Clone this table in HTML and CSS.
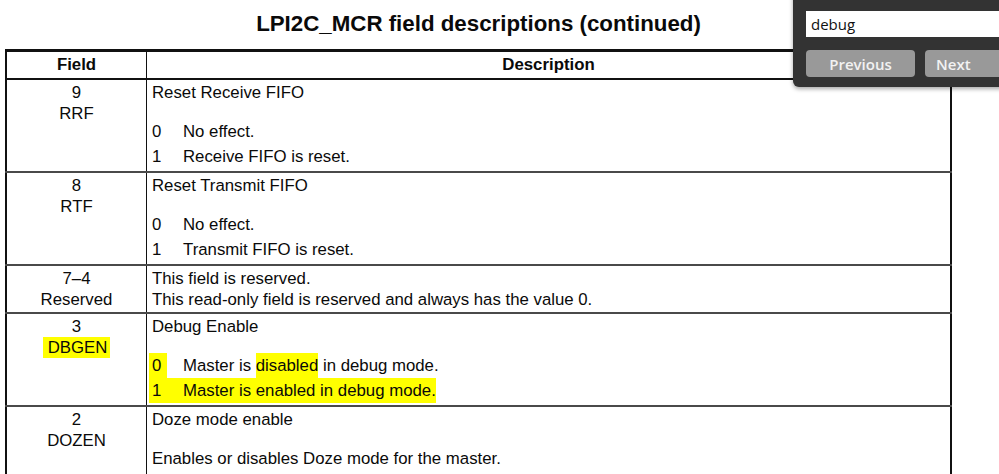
FILE: index.html
```html
<!DOCTYPE html>
<html>
<head>
<meta charset="utf-8">
<link rel="stylesheet" href="styles.css">
</head>
<body>
<div class="page">
  <h1 class="title">LPI2C_MCR field descriptions (continued)</h1>
  <table class="fields">
    <thead>
      <tr><th class="c-field">Field</th><th class="c-desc">Description</th></tr>
    </thead>
    <tbody>
      <tr>
        <td class="c-field"><div>9</div><div>RRF</div></td>
        <td class="c-desc">
          <div class="line">Reset Receive FIFO</div>
          <div class="values">
            <div class="val"><span class="num">0</span><span>No effect.</span></div>
            <div class="val"><span class="num">1</span><span>Receive FIFO is reset.</span></div>
          </div>
        </td>
      </tr>
      <tr>
        <td class="c-field"><div>8</div><div>RTF</div></td>
        <td class="c-desc">
          <div class="line">Reset Transmit FIFO</div>
          <div class="values">
            <div class="val"><span class="num">0</span><span>No effect.</span></div>
            <div class="val"><span class="num">1</span><span>Transmit FIFO is reset.</span></div>
          </div>
        </td>
      </tr>
      <tr>
        <td class="c-field"><div>7–4</div><div>Reserved</div></td>
        <td class="c-desc">
          <div class="line">This field is reserved.</div>
          <div class="line">This read-only field is reserved and always has the value 0.</div>
        </td>
      </tr>
      <tr>
        <td class="c-field"><div>3</div><div><span class="hl hl-name">DBGEN</span></div></td>
        <td class="c-desc">
          <div class="line">Debug Enable</div>
          <div class="values">
            <div class="val"><span class="num"><span class="hl hl-num">0</span></span><span>Master is <span class="hl hl-word">disabled</span> in debug mode.</span></div>
            <div class="val"><span class="hl hl-line"><span class="num">1</span><span>Master is enabled in debug mode.</span></span></div>
          </div>
        </td>
      </tr>
      <tr class="last-row">
        <td class="c-field"><div>2</div><div>DOZEN</div></td>
        <td class="c-desc">
          <div class="line">Doze mode enable</div>
          <div class="values">
            <div class="val">Enables or disables Doze mode for the master.</div>
          </div>
        </td>
      </tr>
    </tbody>
  </table>
</div>

<div class="findbar">
  <div class="find-label">Find</div>
  <div class="find-input">debug</div>
  <div class="find-buttons">
    <button class="find-btn btn-prev">Previous</button>
    <button class="find-btn btn-next">Next</button>
  </div>
</div>
</body>
</html>
```

FILE: styles.css
```css
html, body {
  margin: 0;
  padding: 0;
  background: #ffffff;
  overflow: hidden;
}

body {
  width: 999px;
  height: 474px;
  position: relative;
  font-family: "Liberation Sans", Arial, sans-serif;
  color: #0a0a0a;
}

.page {
  padding-left: 5px;
  width: 947px;
}

.title {
  margin: 0;
  padding-top: 12px;
  height: 49px;
  box-sizing: border-box;
  text-align: center;
  font-size: 22.3px;
  line-height: 24px;
  font-weight: bold;
  color: #0a0a0a;
}

.fields {
  width: 947px;
  border-collapse: collapse;
  border: 2px solid #111;
  border-top-width: 3px;
  font-size: 16.8px;
}

.fields th {
  font-weight: bold;
  font-size: 16.8px;
  line-height: 22px;
  padding: 2px 0 2px;
  text-align: center;
  border-bottom: 2px solid #111;
}

.fields th.c-field {
  border-right: 1px solid #111;
}

.c-field {
  width: 139px;
}

.fields td {
  vertical-align: top;
  border-top: 2px solid #4a4a4a;
  padding: 2px 5px 2px 5px;
  line-height: 21px;
}

.fields .last-row td {
  padding-bottom: 12px;
}

.fields td.c-field {
  text-align: center;
  border-right: 1px solid #111;
  padding-left: 0;
  padding-right: 0;
}

.values {
  margin-top: 16px;
}

.val {
  display: flex;
  line-height: 25px;
  height: 25px;
}

.num {
  display: inline-block;
  width: 31px;
  flex: none;
}

.hl {
  background: #ffff00;
}

.hl-name {
  display: inline-block;
  padding: 0 3px 0 5px;
  line-height: 21px;
}

.hl-num {
  display: inline-block;
  padding: 0 6px 0 3px;
  margin-left: -3px;
}

.hl-word {
  display: inline-block;
}

.hl-line {
  display: inline-flex;
  padding-left: 3px;
  margin-left: -3px;
}

.hl-line .num {
  width: 31px;
}

/* Find bar overlay */
.findbar {
  position: absolute;
  left: 793px;
  top: -22px;
  width: 240px;
  height: 109px;
  box-sizing: border-box;
  background: #333333;
  border-bottom-left-radius: 6px;
  box-shadow: 0 2px 4px rgba(0,0,0,0.35);
  padding: 6px 0 0 13px;
  font-family: "Open Sans", "Noto Sans", sans-serif;
}

.find-label {
  color: #dddddd;
  font-size: 14px;
  line-height: 18px;
  height: 27px;
}

.find-input {
  background: #ffffff;
  height: 26px;
  line-height: 26px;
  padding-left: 5px;
  font-size: 15px;
  color: #111;
}

.find-buttons {
  display: flex;
  gap: 10px;
  margin-top: 13px;
}

.find-btn {
  height: 27px;
  border: none;
  border-radius: 4px;
  background: #999999;
  color: #f2f2f2;
  font-family: "Open Sans", "Noto Sans", sans-serif;
  font-weight: 600;
  font-size: 15px;
  padding: 0;
}

.btn-prev {
  width: 109px;
}

.btn-next {
  width: 100px;
  text-align: left;
  padding-left: 11px;
}
```
